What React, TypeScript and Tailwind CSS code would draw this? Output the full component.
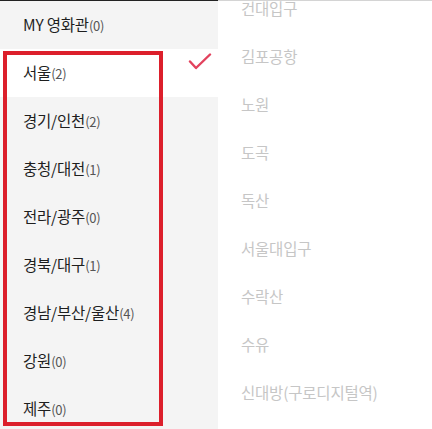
import React from "react";

const regions = [
  { name: "MY 영화관", count: 0 },
  { name: "서울", count: 2, selected: true },
  { name: "경기/인천", count: 2 },
  { name: "충청/대전", count: 1 },
  { name: "전라/광주", count: 0 },
  { name: "경북/대구", count: 1 },
  { name: "경남/부산/울산", count: 4 },
  { name: "강원", count: 0 },
  { name: "제주", count: 0 },
];

const theaters = [
  "건대입구",
  "김포공항",
  "노원",
  "도곡",
  "독산",
  "서울대입구",
  "수락산",
  "수유",
  "신대방(구로디지털역)",
];

const font = { fontFamily: '"Noto Sans CJK KR", "Noto Sans", sans-serif' };

export default function App() {
  return (
    <div className="relative flex w-[432px] h-[429px] overflow-hidden bg-white" style={font}>
      <div className="w-[218px] shrink-0 bg-[#f4f4f4] border-t border-[#222]">
        {regions.map((r) => (
          <div
            key={r.name}
            className={`flex h-[48px] items-center justify-between pl-[23px] pr-[6px] ${r.selected ? "bg-white" : ""}`}
          >
            <span className="text-[15.5px] text-[#1e1e1e] tracking-[-0.2px]">
              {r.name}
              <span className="text-[13px] text-[#555]">({r.count})</span>
            </span>
            {r.selected && (
              <svg width="24" height="20" viewBox="0 0 24 20" className="self-start mt-[4px]">
                <path d="M2 8.5 L8 15 L22 1.5" fill="none" stroke="#e2425d" strokeWidth="2.4" strokeLinecap="round" strokeLinejoin="round" />
              </svg>
            )}
          </div>
        ))}
      </div>
      <div className="flex-1 border-t border-[#d4d4d4] overflow-hidden">
        <div className="-mt-[16px]">
          {theaters.map((t) => (
            <div key={t} className="flex h-[48px] items-center pl-[23px] text-[15.5px] text-[#c6c6c6] tracking-[-0.2px]">
              {t}
            </div>
          ))}
        </div>
      </div>
      <div className="absolute left-[3px] top-[51px] w-[160px] h-[375px] border-[4px] border-[#dc1f2b] pointer-events-none" />
    </div>
  );
}
